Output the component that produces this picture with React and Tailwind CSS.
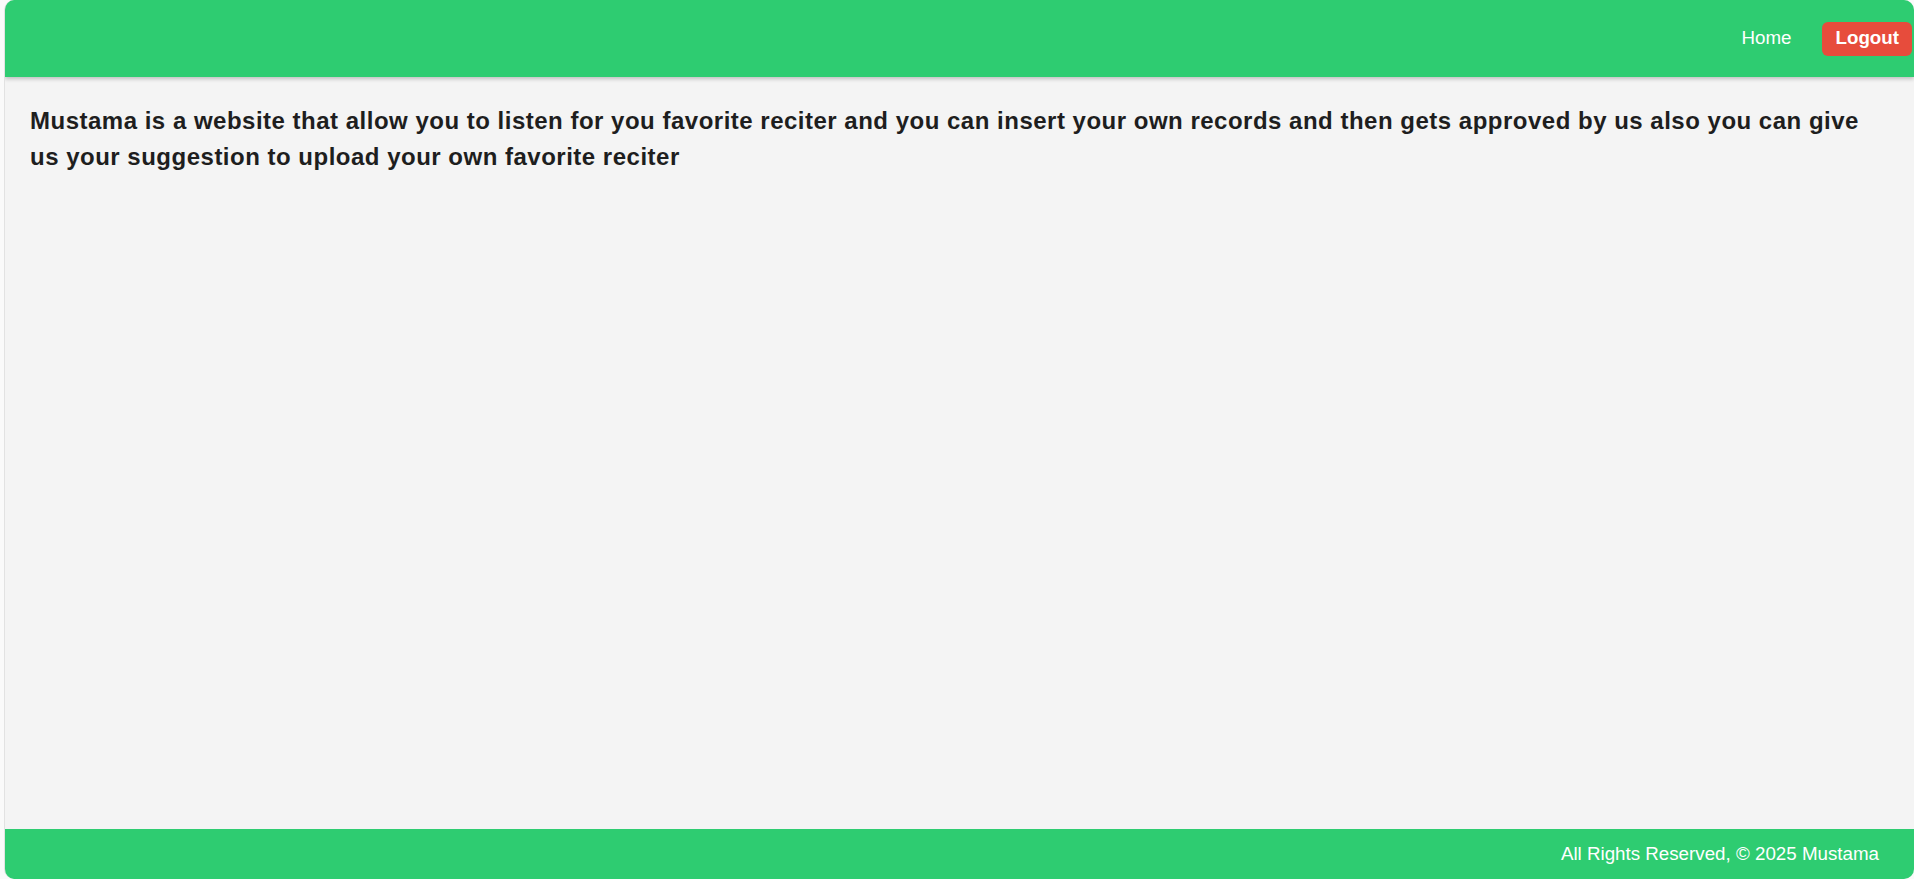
export default function App() {
  return (
    <div
      className="h-screen w-full bg-[#fafafa] pl-[4px] overflow-hidden"
      style={{ fontFamily: '"Liberation Sans", Arial, sans-serif' }}
    >
      <div className="h-full flex flex-col bg-[#f4f4f4] border-l border-[#e2e2e2] rounded-[10px] overflow-hidden">
        <header className="relative z-10 h-[77px] shrink-0 bg-[#2ecc71] flex items-center justify-end pr-[2px] shadow-[0_2px_4px_rgba(0,0,0,0.22)]">
          <nav className="flex items-center gap-[31px]">
            <a href="#" className="text-white text-[18.75px]">
              Home
            </a>
            <button className="bg-[#e74c3c] text-white font-bold text-[18.75px] h-[34px] px-[13px] rounded-[6px] leading-none">
              Logout
            </button>
          </nav>
        </header>

        <main className="flex-1 pl-[25px] pr-[30px] pt-[26px]">
          <p className="text-[24px] leading-[36px] font-bold tracking-[0.5px] text-[#1e1e1e]">
            Mustama is a website that allow you to listen for you favorite reciter and you can insert your own records and then gets approved by us also you can give us your suggestion to upload your own favorite reciter
          </p>
        </main>

        <footer className="h-[50px] shrink-0 bg-[#2ecc71] flex items-center justify-end pr-[35px]">
          <p className="text-white text-[18.75px]">All Rights Reserved, © 2025 Mustama</p>
        </footer>
      </div>
    </div>
  )
}
